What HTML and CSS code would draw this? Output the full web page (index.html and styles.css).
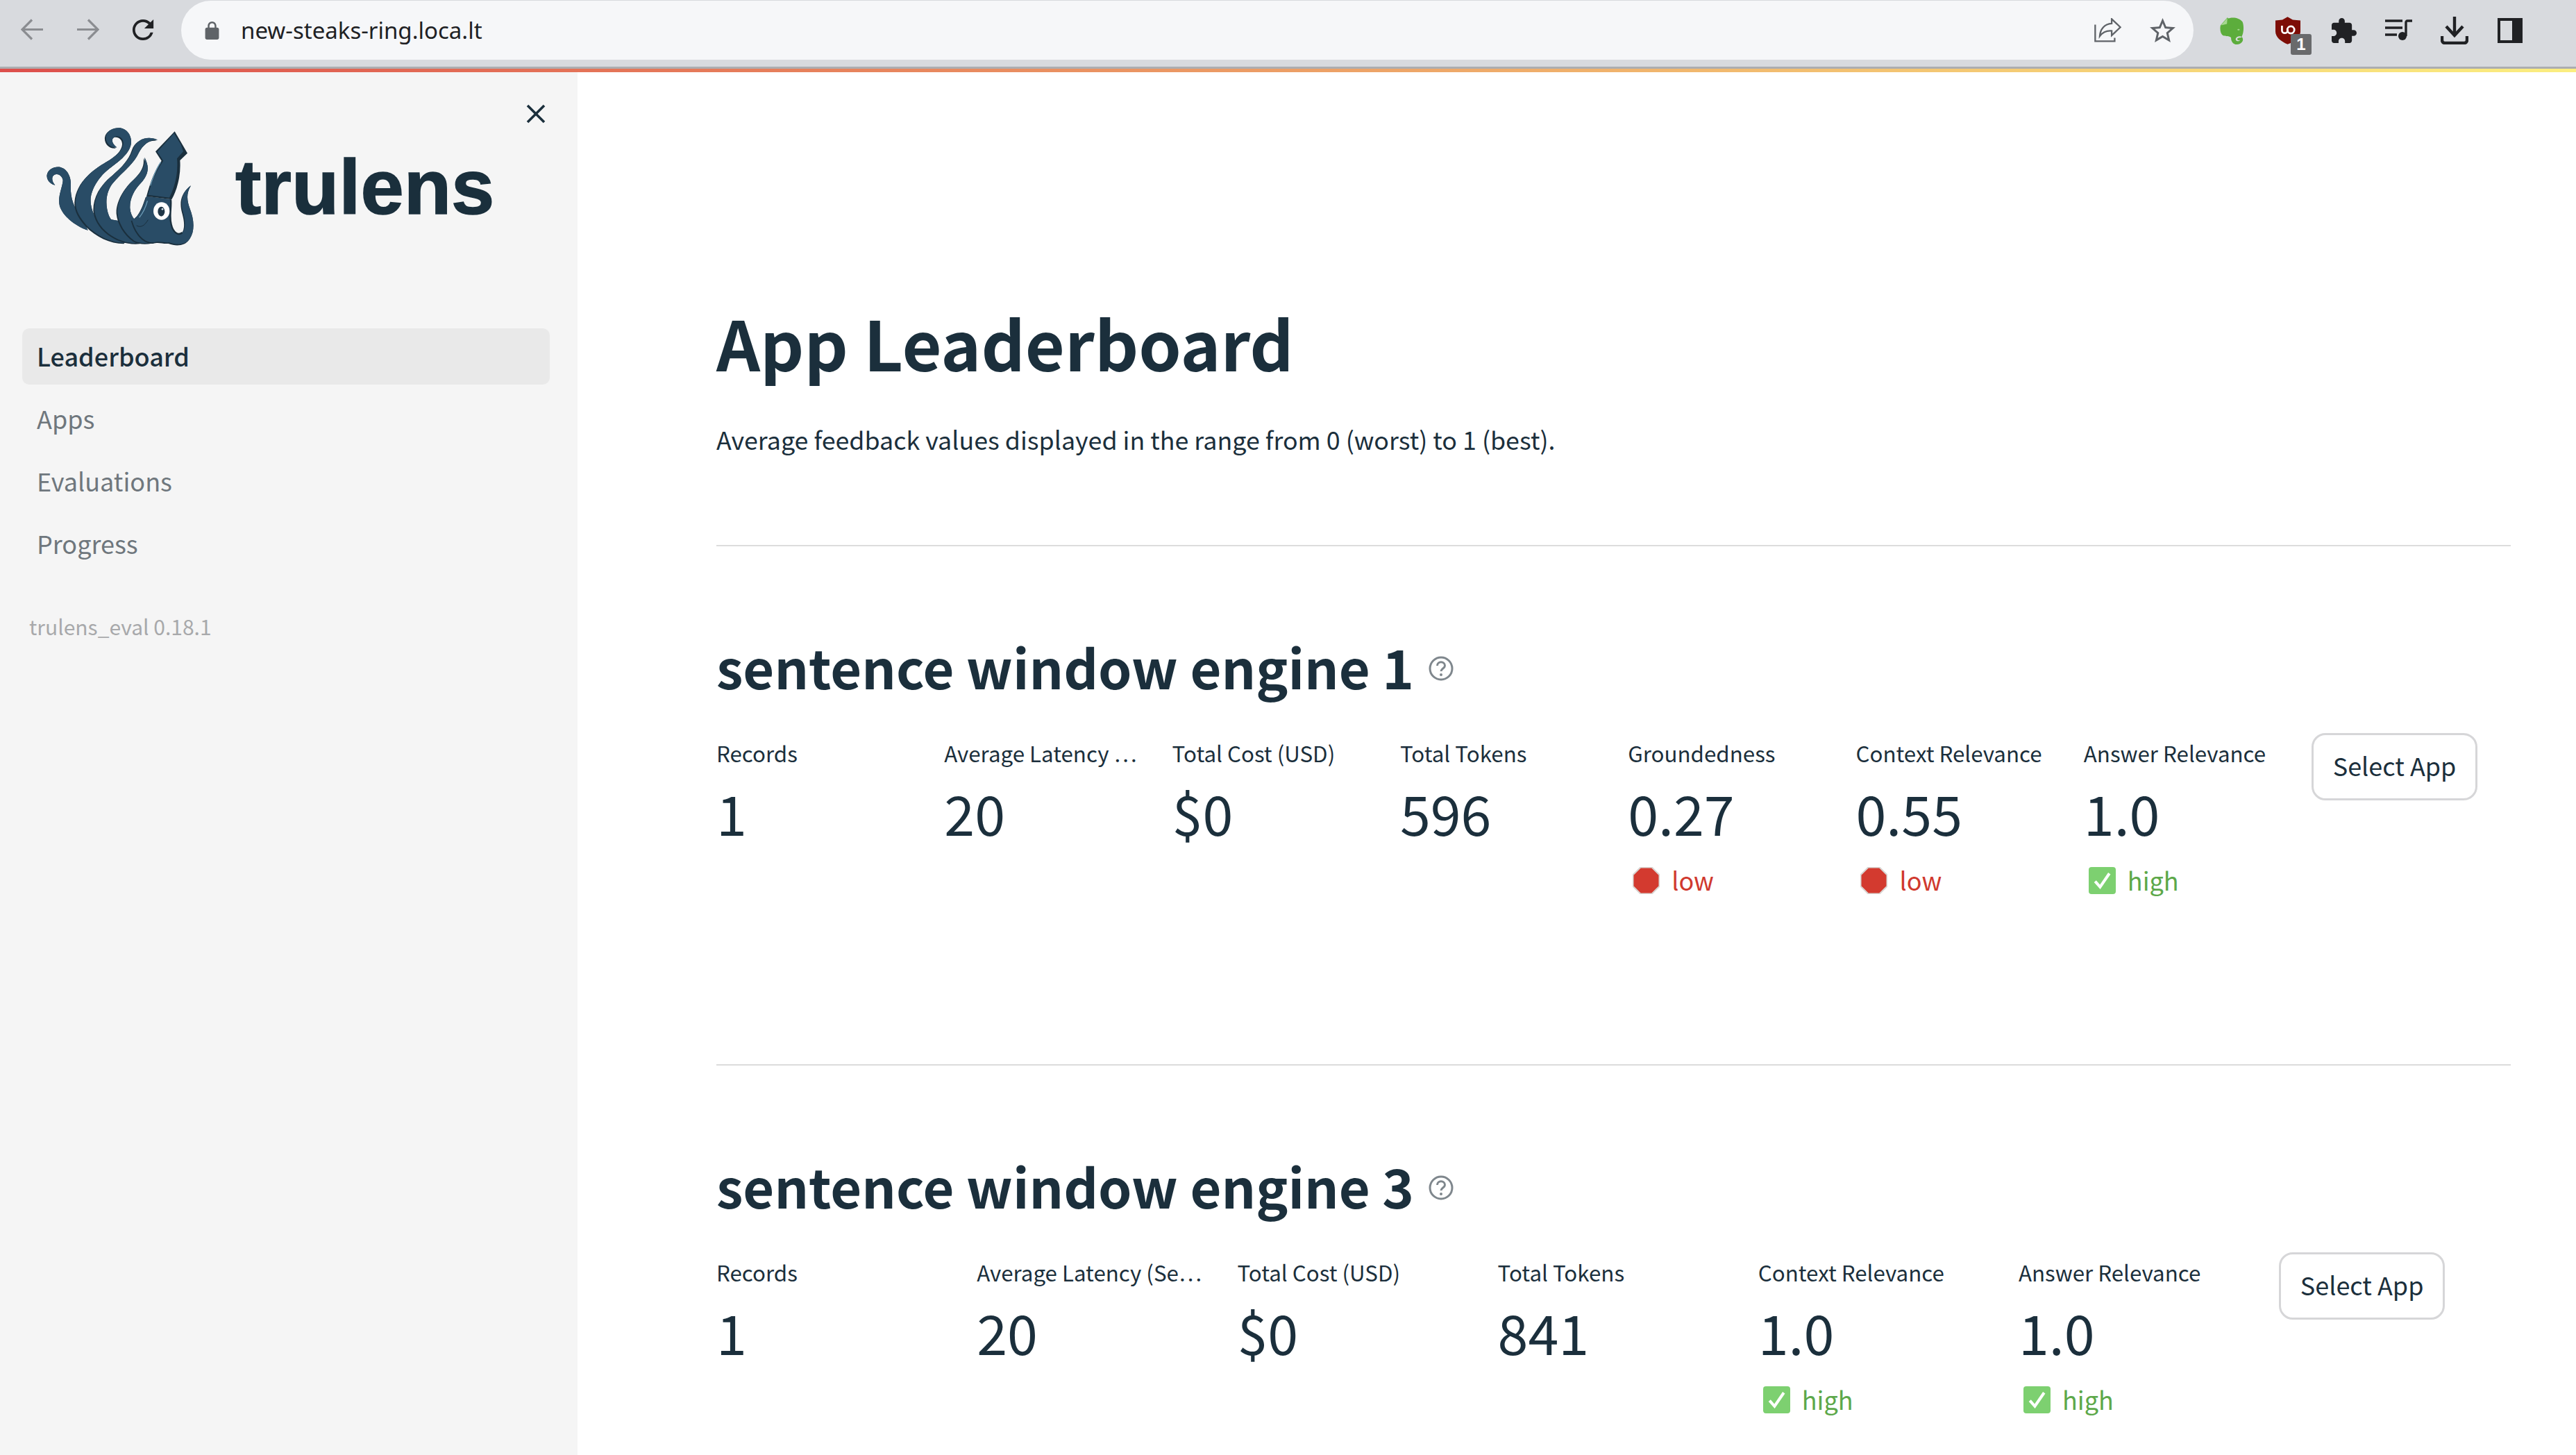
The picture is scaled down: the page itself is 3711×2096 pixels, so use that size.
FILE: index.html
```html
<!DOCTYPE html>
<html lang="en">
<head>
<meta charset="utf-8">
<title>App Leaderboard</title>
<link rel="stylesheet" href="styles.css">
</head>
<body>
<header class="toolbar">
  <svg class="ic ic-back" viewBox="0 0 33 31"><path d="M32 15.5H2M16 1.5 2 15.5l14 14" fill="none" stroke="#8b8d91" stroke-width="3.2"/></svg>
  <svg class="ic ic-fwd" viewBox="0 0 33 31"><path d="M1 15.5h30M17 1.5l14 14-14 14" fill="none" stroke="#8b8d91" stroke-width="3.2"/></svg>
  <svg class="ic ic-reload" viewBox="3 3 18 18"><path fill="#202124" d="M17.65 6.35A7.958 7.958 0 0012 4c-4.42 0-7.99 3.58-7.99 8s3.57 8 7.99 8c3.73 0 6.84-2.55 7.73-6h-2.08A5.99 5.99 0 0112 18c-3.31 0-6-2.69-6-6s2.69-6 6-6c1.66 0 3.14.69 4.22 1.78L13 11h7V4l-2.35 2.35z"/></svg>
  <div class="omnibox">
    <svg class="ic-lock" viewBox="4 1 16 21"><path fill="#5f6368" d="M18 8h-1V6c0-2.76-2.24-5-5-5S7 3.24 7 6v2H6c-1.100 0-2 .9-2 2v10c0 1.100.9 2 2 2h12c1.100 0 2-.9 2-2V10c0-1.100-.9-2-2-2zM9 6c0-1.660 1.340-3 3-3s3 1.340 3 3v2H9V6z"/></svg>
    <span class="url">new-steaks-ring.loca.lt</span>
    <svg class="ic-share" viewBox="56 36 118 106"><path d="M60 65v72h85v-15M132 40l38 36-38 36V92c-22-2-37 3-52 23 2-30 20-53 52-55Z" fill="none" stroke="#5f6368" stroke-width="7"/></svg>
    <svg class="ic-star" viewBox="2 2 20 19"><path fill="#5f6368" d="M22 9.240l-7.190-.62L12 2 9.190 8.630 2 9.240l5.460 4.730L5.820 21 12 17.270 18.180 21l-1.630-7.030L22 9.240zM12 15.400l-3.760 2.270 1-4.280-3.320-2.880 4.380-.38L12 6.100l1.710 4.040 4.380.38-3.320 2.880 1 4.280L12 15.400z"/></svg>
  </div>
  <svg class="ic ic-ever" viewBox="60 40 105 125"><path fill="#5cad3c" fill-rule="evenodd" d="M92 44 62 78C58 95 62 115 72 122 85 128 100 122 108 132 108 150 118 163 135 162 155 160 165 145 158 132 150 122 132 125 128 138 130 150 145 150 148 142 140 146 134 142 136 136 145 130 155 135 155 128 165 110 165 75 158 62 145 45 115 40 96 48Z"/><path fill="#a6d890" d="M92 46 90 72 64 78Z"/><ellipse cx="141" cy="97" rx="5" ry="3" fill="#a6d890"/></svg>
  <div class="ublock">
    <svg class="ic-ub" viewBox="298 42 107 118"><path fill="#7d0d06" d="M350 42 372 55 405 58V105C405 130 380 148 350 160 322 148 298 130 298 105V58L328 55Z"/><path d="M326 80V100C326 116 350 116 350 100V96" fill="none" stroke="#fff" stroke-width="8"/><circle cx="364" cy="98" r="15" fill="none" stroke="#fff" stroke-width="8"/></svg>
    <span class="ub-badge">1</span>
  </div>
  <svg class="ic ic-puzzle" viewBox="2 1 21 21"><path fill="#202124" d="M20.500 11H19V7c0-1.100-.9-2-2-2h-4V3.500C13 2.120 11.880 1 10.500 1S8 2.120 8 3.500V5H4c-1.100 0-1.990.9-1.990 2v3.800H3.500c1.490 0 2.700 1.210 2.700 2.700s-1.210 2.700-2.700 2.700H2V20c0 1.100.9 2 2 2h3.800v-1.500c0-1.490 1.210-2.700 2.700-2.700 1.490 0 2.700 1.210 2.700 2.700V22H17c1.100 0 2-.9 2-2v-4h1.500c1.380 0 2.500-1.120 2.500-2.500S21.880 11 20.500 11z"/></svg>
  <svg class="ic ic-queue" viewBox="0 0 40 30"><path d="M0 2h25M0 12h25M0 22h17M30 24V4a2 2 0 0 1 2-2h7" fill="none" stroke="#202124" stroke-width="3.400"/><circle cx="25" cy="24" r="6" fill="#202124"/></svg>
  <svg class="ic ic-dl" viewBox="0 0 40 40"><path d="M20 0v27M8 14l12 13 12-13M2 28v6a4 4 0 0 0 4 4h28a4 4 0 0 0 4-4v-6" fill="none" stroke="#202124" stroke-width="4.400"/></svg>
  <svg class="ic ic-side" viewBox="0 0 36 36"><path fill="#202124" fill-rule="evenodd" d="M0 0h36v36H0ZM4 4v28h17V4Z"/></svg>
</header>
<div class="decoration"></div>
<div class="app">
  <aside class="sidebar">
    <button class="close" aria-label="Close"><svg viewBox="0 0 28 28"><path d="M2 2l24 24M26 2 2 26" fill="none" stroke="#1b2f3c" stroke-width="3.600"/></svg></button>
    <div class="brand">
      <svg class="squid" viewBox="0 0 840 690">
        <defs>
          <path id="t1" d="M118 350C95 345 80 325 83 305 88 280 115 268 140 272 170 280 187 310 186 350 184 390 190 440 235 490L260 545C200 525 150 480 138 440 128 400 150 360 152 330 150 310 130 298 115 305 100 315 105 335 118 350Z"/>
          <path id="t2" d="M385 187C355 190 335 165 338 140 342 112 375 100 400 103 430 108 448 135 447 165 445 205 405 240 370 265 320 300 280 350 272 405 268 460 300 520 350 545 385 560 410 565 440 575L420 600C360 600 300 570 255 525 225 490 205 460 207 420 212 350 260 300 320 262 360 238 410 210 413 170 414 148 395 135 378 140 362 146 358 165 385 187Z"/>
          <path id="web" d="M340 495 395 505 430 570 360 550Z"/>
          <path id="t3" d="M562 155C530 150 500 172 480 210 455 265 400 300 365 345 335 385 335 440 350 480 365 520 420 545 470 560L490 600C440 605 390 590 350 560 310 530 290 490 288 455 288 395 320 345 370 305 410 270 440 240 455 195 470 150 520 135 562 155Z"/>
          <path id="t4" d="M505 230C525 270 525 300 490 340 460 370 440 410 442 450 445 490 470 515 510 530L570 590C530 605 490 605 460 590 420 560 392 515 388 470 385 420 420 360 460 325 490 295 510 270 505 230Z"/>
          <path id="head" d="M513 398 618 412C622 450 610 480 620 520 628 555 650 570 668 555 685 535 680 500 672 470 660 430 660 385 705 352 682 390 690 420 700 450 720 500 722 550 700 582 685 605 650 612 612 598 585 600 570 590 545 598 510 600 470 570 450 500 480 490 500 440 513 398Z"/>
        </defs>
        <g class="squid-shade">
          <use href="#t1"/><use href="#t2"/><use href="#web"/><use href="#t3"/><use href="#t4"/><use href="#head"/>
        </g>
        <use href="#t1" class="squid-body"/>
        <use href="#t2" class="squid-shade" transform="translate(-5 4)"/><use href="#t2" class="squid-body"/>
        <use href="#web" class="squid-body"/>
        <use href="#t3" class="squid-shade" transform="translate(-5 4)"/><use href="#t3" class="squid-body"/>
        <use href="#t4" class="squid-shade" transform="translate(-5 4)"/><use href="#t4" class="squid-body"/>
        <use href="#head" class="squid-shade" transform="translate(-4 5)"/><use href="#head" class="squid-body"/>
        <path class="squid-shade" d="M635 118 690 212 658 243C662 300 650 360 622 412 L513 398C530 340 545 290 578 245L552 205Z"/>
        <path class="squid-body" d="M632 126 662 175 672 205 645 235C650 290 640 350 612 404L520 392C535 340 552 292 586 245L560 206Z"/>
        <path d="M618 412C622 450 610 480 620 520 628 555 650 570 668 555" fill="none" stroke="#1a2f3d" stroke-width="7"/>
        <path d="M575 250C555 280 540 320 530 352M517 418C510 445 498 470 482 490" fill="none" stroke="#6c9cb8" stroke-width="4"/>
        <path d="M470 525C490 535 505 525 520 500" fill="none" stroke="#1a2f3d" stroke-width="3"/>
        <ellipse cx="578" cy="462" rx="35" ry="38" fill="#fff"/>
        <ellipse cx="577" cy="464" rx="15" ry="21" fill="#1f3647"/>
        <circle cx="582" cy="454" r="4" fill="#d6e4ec"/>
      </svg>
      <span class="wordmark">trulens</span>
    </div>
    <nav class="nav">
      <a class="nav-item active">Leaderboard</a>
      <a class="nav-item">Apps</a>
      <a class="nav-item">Evaluations</a>
      <a class="nav-item">Progress</a>
    </nav>
    <p class="version">trulens_eval 0.18.1</p>
  </aside>
  <main class="main">
    <h1 class="title">App Leaderboard</h1>
    <p class="lead">Average feedback values displayed in the range from 0 (worst) to 1 (best).</p>

    <section class="section">
      <h2 class="app-name">sentence window engine 1<svg class="help" viewBox="0 0 36 36"><circle cx="18" cy="18" r="16" fill="none" stroke="#7f878d" stroke-width="3"/><path d="M12.500 14c0-7 11-7 11 0 0 4-5.500 4-5.500 8" fill="none" stroke="#7f878d" stroke-width="3"/><circle cx="18" cy="27" r="2" fill="#7f878d"/></svg></h2>
      <div class="metrics metrics-seven">
        <div class="metric"><div class="label">Records</div><div class="value">1</div></div>
        <div class="metric"><div class="label">Average Latency …</div><div class="value">20</div></div>
        <div class="metric"><div class="label">Total Cost (USD)</div><div class="value">$0</div></div>
        <div class="metric"><div class="label">Total Tokens</div><div class="value">596</div></div>
        <div class="metric"><div class="label">Groundedness</div><div class="value">0.27</div>
          <div class="delta low"><svg class="mark" viewBox="0 0 38 38"><path class="stop" d="M11 0.500h16L37.500 11v16L27 37.500H11L0.500 27V11Z"/></svg>low</div></div>
        <div class="metric"><div class="label">Context Relevance</div><div class="value">0.55</div>
          <div class="delta low"><svg class="mark" viewBox="0 0 38 38"><path class="stop" d="M11 0.500h16L37.500 11v16L27 37.500H11L0.500 27V11Z"/></svg>low</div></div>
        <div class="metric"><div class="label">Answer Relevance</div><div class="value">1.0</div>
          <div class="delta high"><svg class="mark" viewBox="0 0 38 38"><rect width="38" height="38" rx="4" fill="#7dd070"/><path d="M9 20l7 8L29 9" fill="none" stroke="#fff" stroke-width="4"/></svg>high</div></div>
        <button class="select">Select App</button>
      </div>
    </section>

    <section class="section">
      <h2 class="app-name">sentence window engine 3<svg class="help" viewBox="0 0 36 36"><circle cx="18" cy="18" r="16" fill="none" stroke="#7f878d" stroke-width="3"/><path d="M12.500 14c0-7 11-7 11 0 0 4-5.500 4-5.500 8" fill="none" stroke="#7f878d" stroke-width="3"/><circle cx="18" cy="27" r="2" fill="#7f878d"/></svg></h2>
      <div class="metrics metrics-six">
        <div class="metric"><div class="label">Records</div><div class="value">1</div></div>
        <div class="metric"><div class="label">Average Latency (Se…</div><div class="value">20</div></div>
        <div class="metric"><div class="label">Total Cost (USD)</div><div class="value">$0</div></div>
        <div class="metric"><div class="label">Total Tokens</div><div class="value">841</div></div>
        <div class="metric"><div class="label">Context Relevance</div><div class="value">1.0</div>
          <div class="delta high"><svg class="mark" viewBox="0 0 38 38"><rect width="38" height="38" rx="4" fill="#7dd070"/><path d="M9 20l7 8L29 9" fill="none" stroke="#fff" stroke-width="4"/></svg>high</div></div>
        <div class="metric"><div class="label">Answer Relevance</div><div class="value">1.0</div>
          <div class="delta high"><svg class="mark" viewBox="0 0 38 38"><rect width="38" height="38" rx="4" fill="#7dd070"/><path d="M9 20l7 8L29 9" fill="none" stroke="#fff" stroke-width="4"/></svg>high</div></div>
        <button class="select">Select App</button>
      </div>
    </section>
  </main>
</div>
</body>
</html>
```

FILE: styles.css
```css
* { box-sizing: border-box; }
html, body { margin: 0; height: 100%; overflow: hidden; }
body {
  display: flex;
  flex-direction: column;
  height: 2096px;
  background: #fff;
  color: #1b2f3c;
  font-family: "Noto Sans CJK KR", "Source Sans Pro", "Noto Sans", sans-serif;
}

/* browser chrome */
.toolbar {
  flex: none;
  height: 99px;
  display: flex;
  align-items: flex-start;
  background: #d8dade;
  border-bottom: 3px solid #acadb0;
}
.ic { flex: none; display: block; }
.ic-back { width: 33px; height: 31px; margin: 27px 0 0 30px; }
.ic-fwd { width: 33px; height: 31px; margin: 27px 0 0 47px; }
.ic-reload { width: 34px; height: 34px; margin: 26px 0 0 46px; }
.omnibox {
  flex: none;
  width: 2899px;
  height: 85px;
  margin: 1px 0 0 38px;
  padding: 0 26px 0 34px;
  display: flex;
  align-items: center;
  background: #f6f7f9;
  border-radius: 43px;
}
.ic-lock { width: 21px; height: 26px; flex: none; }
.url {
  margin-left: 31px;
  flex: 1;
  font: 400 33px/40px "Noto Sans", sans-serif;
  color: #202124;
}
.ic-share { width: 39px; height: 35px; flex: none; }
.ic-star { width: 37px; height: 35px; flex: none; margin-left: 41px; }
.ic-ever { width: 35px; height: 41px; margin: 24px 0 0 38px; }
.ublock { flex: none; position: relative; width: 36px; height: 40px; margin: 24px 0 0 45px; }
.ic-ub { width: 36px; height: 40px; display: block; }
.ub-badge {
  position: absolute;
  left: 22px;
  top: 25px;
  width: 30px;
  height: 30px;
  border-radius: 3px;
  background: #696a6c;
  color: #fff;
  text-align: center;
  font: 700 24px/30px "Liberation Sans", sans-serif;
}
.ic-puzzle { width: 36px; height: 36px; margin: 26px 0 0 45px; }
.ic-queue { width: 40px; height: 30px; margin: 28px 0 0 41px; }
.ic-dl { width: 40px; height: 40px; margin: 24px 0 0 40px; }
.ic-side { width: 36px; height: 36px; margin: 26px 0 0 42px; }

.decoration {
  flex: none;
  height: 5px;
  background: linear-gradient(90deg, #dd4f4c, #fbee80);
}

/* app */
.app { flex: 1; display: flex; min-height: 0; }
.sidebar {
  flex: none;
  width: 832px;
  position: relative;
  background: #f5f5f5;
  padding: 46px 40px 0 32px;
}
.close {
  position: absolute;
  left: 758px;
  top: 46px;
  width: 28px;
  height: 28px;
  padding: 0;
  border: 0;
  background: none;
}
.close svg { display: block; }
.brand { display: flex; align-items: center; height: 230px; margin-left: 8px; }
.squid { width: 280px; height: 230px; flex: none; }
.squid-shade { fill: #1a2f3d; }
.squid-body { fill: #294c66; }
.wordmark {
  margin: 10px 0 0 19px;
  font: 700 112px/120px "Liberation Sans", sans-serif;
  -webkit-text-stroke: 1.5px #1a2f3c;
  color: #1a2f3c;
}
.nav { margin-top: 93px; display: flex; flex-direction: column; }
.nav-item {
  display: block;
  height: 90px;
  padding: 0 21px;
  line-height: 81px;
  font-size: 36px;
  color: #6f777d;
}
.nav-item.active {
  height: 81px;
  line-height: 79px;
  margin-bottom: 8px;
  border-radius: 10px;
  background: #e9e9e9;
  color: #1b2f3c;
  font-weight: 500;
}
.version {
  margin: 50px 0 0 10px;
  font-size: 30px;
  line-height: 40px;
  color: #a8a9ab;
}

.main { flex: 1; min-width: 0; padding: 318px 94px 0 200px; }
.title {
  margin: 0;
  font-size: 98.4px;
  line-height: 140px;
  font-weight: 700;
}
.lead {
  margin: 40px 0 123px;
  font-size: 35.8px;
  line-height: 60px;
}
.section { border-top: 2px solid #dcdcdc; padding: 122px 0 0; }
.section:first-of-type { height: 748px; }
.app-name {
  margin: 0 0 47px;
  font-size: 77.5px;
  line-height: 100px;
  font-weight: 700;
  white-space: nowrap;
}
.help { width: 36px; height: 36px; margin: 0 0 18px 21px; vertical-align: middle; }
.metrics { display: grid; align-items: start; }
.metrics-seven { grid-template-columns: repeat(7, 328.3px) 239px; }
.metrics-six { grid-template-columns: repeat(6, 375.2px) 239px; }
.metric { min-width: 0; padding-top: 9px; }
.label {
  font-size: 31.3px;
  line-height: 40px;
  white-space: nowrap;
}
.value {
  margin-top: 15px;
  font-size: 79px;
  line-height: 100px;
  font-weight: 400;
}
.delta {
  margin-top: 27px;
  padding-left: 7px;
  display: flex;
  align-items: flex-start;
  gap: 17px;
  font-size: 36px;
  line-height: 40px;
}
.delta.low { color: #d0392e; }
.delta.high { color: #5da84a; }
.mark { width: 39px; height: 39px; flex: none; margin-top: 2px; }
.stop { fill: #d33a2f; stroke: #d9d5d2; stroke-width: 2; }
.select {
  display: block;
  height: 97px;
  padding: 0 0 6px;
  background: #fff;
  border: 3px solid #d6d6d8;
  border-radius: 20px;
  color: #1b2f3c;
  font-family: inherit;
  font-size: 36px;
}
```
